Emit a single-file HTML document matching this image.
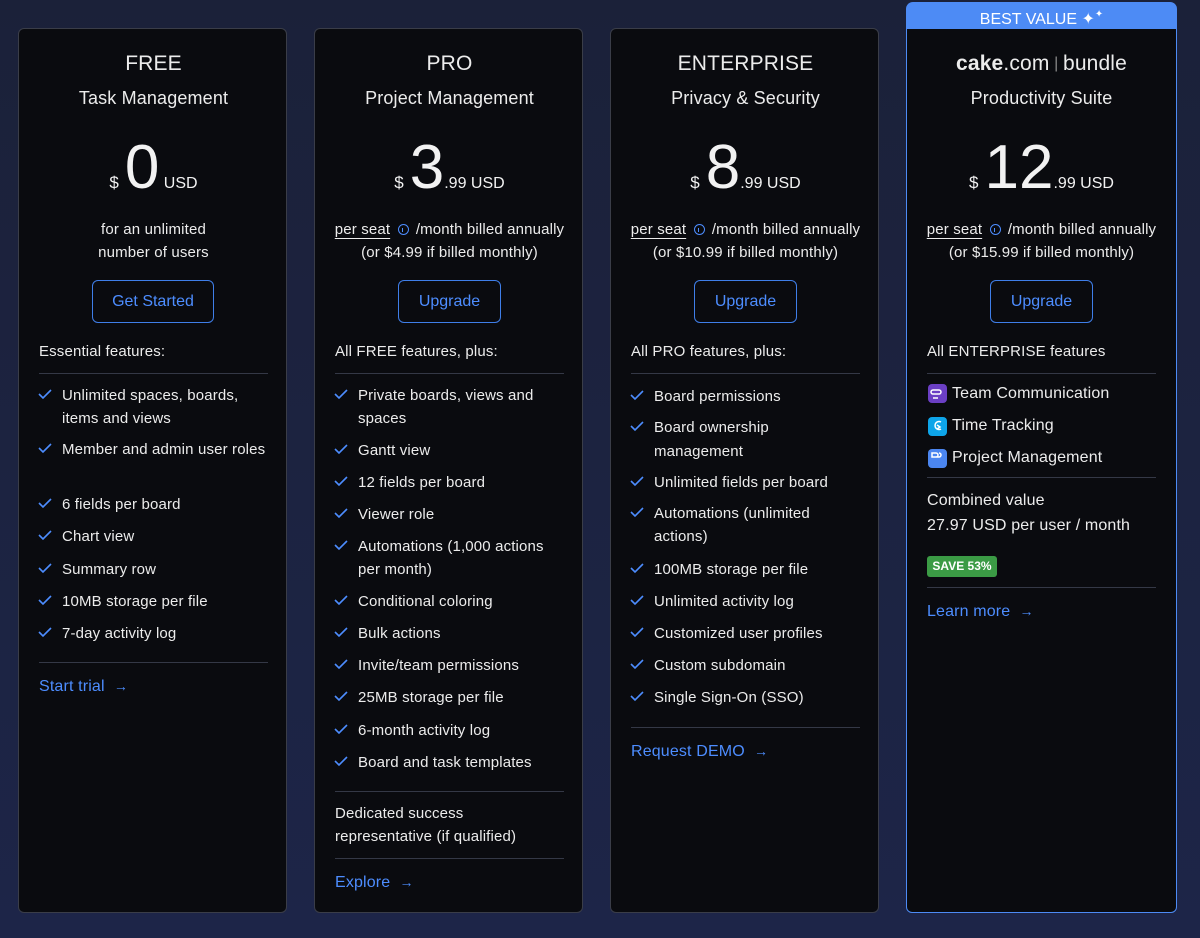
<!DOCTYPE html>
<html><head><meta charset="utf-8"><style>
*{margin:0;padding:0;box-sizing:border-box}
body{width:1200px;height:938px;overflow:hidden;background:linear-gradient(180deg,#1b2139 0%,#1d2548 100%);font-family:"Liberation Sans",sans-serif;color:#f2f2f2;position:relative}
.card{position:absolute;top:28px;height:885px;width:269px;background:#0a0b0f;border:1px solid #3a3d48;border-radius:6px}
.t{position:absolute;font-size:15px;line-height:24px;white-space:nowrap;color:#ececec;letter-spacing:0.15px}
.c{text-align:center;width:269px;left:0}
.h1{font-size:21px;top:23px!important}
.h2{font-size:18px;top:57px!important}
.hr{position:absolute;height:1px;background:#343846;width:229px;left:20px}
.btn{position:absolute;top:251px;height:43px;border:1px solid #3f7ee8;border-radius:6px;color:#4d8dff;font-size:16px;line-height:41px;text-align:center}
.price{position:absolute;left:0;width:269px;top:108px;display:flex;justify-content:center;align-items:baseline;height:80px}
.price .s{font-size:17px;margin-right:6px}
.price .b{font-size:62px;line-height:62px}
.price .u{font-size:16px}
.li{left:43px}
.link{color:#4d8dff;font-size:16px}
.ps{text-decoration:underline;text-underline-offset:4px}
.i{display:inline-block;width:11px;height:11px;border:1.3px solid #4d8dff;border-radius:50%;vertical-align:-1px;margin:0 3px;position:relative}
.i:after{content:"";position:absolute;left:3.5px;top:3px;width:1.3px;height:4px;background:#4d8dff}
.ar{font-weight:bold;font-size:14px}
</style></head><body>

<!-- FREE -->
<div class="card" style="left:18px">
<div class="t c h1">FREE</div>
<div class="t c h2">Task Management</div>
<div class="price"><span class="s">$</span><span class="b">0</span><span class="u">&nbsp;USD</span></div>
<div class="t c" style="top:189px">for an unlimited</div>
<div class="t c" style="top:212px">number of users</div>
<div class="btn" style="left:73px;width:122px">Get Started</div>
<div class="t" style="left:20px;top:311px">Essential features:</div>
<div class="hr" style="top:344px"></div>
<div class="t li" style="top:355px">Unlimited spaces, boards,</div>
<div class="t li" style="top:378px">items and views</div>
<div class="t li" style="top:409px">Member and admin user roles</div>
<div class="t li" style="top:464px">6 fields per board</div>
<div class="t li" style="top:496px">Chart view</div>
<div class="t li" style="top:529px">Summary row</div>
<div class="t li" style="top:561px">10MB storage per file</div>
<div class="t li" style="top:593px">7-day activity log</div>
<div class="hr" style="top:633px"></div>
<div class="t link" style="left:20px;top:645px">Start trial &nbsp;<span class="ar">→</span></div>
</div>

<!-- PRO -->
<div class="card" style="left:314px">
<div class="t c h1">PRO</div>
<div class="t c h2">Project Management</div>
<div class="price"><span class="s">$</span><span class="b">3</span><span class="u">.99 USD</span></div>
<div class="t c" style="top:189px"><span class="ps">per seat</span> <span class="i"></span> /month billed annually</div>
<div class="t c" style="top:212px">(or $4.99 if billed monthly)</div>
<div class="btn" style="left:83px;width:103px">Upgrade</div>
<div class="t" style="left:20px;top:311px">All FREE features, plus:</div>
<div class="hr" style="top:344px"></div>
<div class="t li" style="top:355px">Private boards, views and</div>
<div class="t li" style="top:378px">spaces</div>
<div class="t li" style="top:410px">Gantt view</div>
<div class="t li" style="top:442px">12 fields per board</div>
<div class="t li" style="top:474px">Viewer role</div>
<div class="t li" style="top:506px">Automations (1,000 actions</div>
<div class="t li" style="top:529px">per month)</div>
<div class="t li" style="top:561px">Conditional coloring</div>
<div class="t li" style="top:593px">Bulk actions</div>
<div class="t li" style="top:625px">Invite/team permissions</div>
<div class="t li" style="top:657px">25MB storage per file</div>
<div class="t li" style="top:690px">6-month activity log</div>
<div class="t li" style="top:722px">Board and task templates</div>
<div class="hr" style="top:762px"></div>
<div class="t" style="left:20px;top:773px">Dedicated success</div>
<div class="t" style="left:20px;top:796px">representative (if qualified)</div>
<div class="hr" style="top:829px"></div>
<div class="t link" style="left:20px;top:841px">Explore &nbsp;<span class="ar">→</span></div>
</div>

<!-- ENTERPRISE -->
<div class="card" style="left:610px">
<div class="t c h1">ENTERPRISE</div>
<div class="t c h2">Privacy &amp; Security</div>
<div class="price"><span class="s">$</span><span class="b">8</span><span class="u">.99 USD</span></div>
<div class="t c" style="top:189px"><span class="ps">per seat</span> <span class="i"></span> /month billed annually</div>
<div class="t c" style="top:212px">(or $10.99 if billed monthly)</div>
<div class="btn" style="left:83px;width:103px">Upgrade</div>
<div class="t" style="left:20px;top:311px">All PRO features, plus:</div>
<div class="hr" style="top:344px"></div>
<div class="t li" style="top:356px">Board permissions</div>
<div class="t li" style="top:387px">Board ownership</div>
<div class="t li" style="top:411px">management</div>
<div class="t li" style="top:442px">Unlimited fields per board</div>
<div class="t li" style="top:473px">Automations (unlimited</div>
<div class="t li" style="top:496px">actions)</div>
<div class="t li" style="top:529px">100MB storage per file</div>
<div class="t li" style="top:561px">Unlimited activity log</div>
<div class="t li" style="top:593px">Customized user profiles</div>
<div class="t li" style="top:625px">Custom subdomain</div>
<div class="t li" style="top:657px">Single Sign-On (SSO)</div>
<div class="hr" style="top:698px"></div>
<div class="t link" style="left:20px;top:710px">Request DEMO &nbsp;<span class="ar">→</span></div>
</div>

<!-- BUNDLE -->
<div style="position:absolute;left:906px;top:2px;width:271px;height:30px;background:#4d8bf5;border-radius:7px 7px 0 0;color:#fff;font-size:16px;line-height:26px;text-align:center">BEST VALUE <span style="font-size:16px">✦</span><span style="font-size:10px;vertical-align:7px">✦</span></div>
<div class="card" style="left:906px;width:271px;border-color:#4d8bf5;border-radius:0 0 6px 6px">
<div class="t c h1" style="width:269px"><b style="font-weight:bold">cake</b>.com<span style="color:#888;font-size:16px;vertical-align:2px"> | </span>bundle</div>
<div class="t c h2">Productivity Suite</div>
<div class="price"><span class="s">$</span><span class="b">12</span><span class="u">.99 USD</span></div>
<div class="t c" style="top:189px"><span class="ps">per seat</span> <span class="i"></span> /month billed annually</div>
<div class="t c" style="top:212px">(or $15.99 if billed monthly)</div>
<div class="btn" style="left:83px;width:103px">Upgrade</div>
<div class="t" style="left:20px;top:311px">All ENTERPRISE features</div>
<div class="hr" style="top:344px"></div>
<div style="position:absolute;left:21px;top:355px;width:19px;height:19px;border-radius:4px;background:#6b3fc4"></div>
<div style="position:absolute;left:21px;top:388px;width:19px;height:19px;border-radius:4px;background:#0ea5e9"></div>
<div style="position:absolute;left:21px;top:420px;width:19px;height:19px;border-radius:4px;background:#4b86f0"></div>
<div class="t" style="left:45px;top:353px;font-size:16px">Team Communication</div>
<div class="t" style="left:45px;top:385px;font-size:16px">Time Tracking</div>
<div class="t" style="left:45px;top:417px;font-size:16px">Project Management</div>
<div class="hr" style="top:448px"></div>
<div class="t" style="left:20px;top:460px;font-size:16px">Combined value</div>
<div class="t" style="left:20px;top:485px;font-size:16px">27.97 USD per user / month</div>
<div style="position:absolute;left:20px;top:527px;width:70px;height:21px;background:#3b9b45;border-radius:3px;color:#fff;font-size:12px;font-weight:bold;line-height:21px;text-align:center">SAVE 53%</div>
<div class="hr" style="top:558px"></div>
<div class="t link" style="left:20px;top:570px">Learn more &nbsp;<span class="ar">→</span></div>
</div>

<svg width="1200" height="938" style="position:absolute;left:0;top:0;pointer-events:none" fill="none" stroke="#4d8dff" stroke-width="1.6">
<path d="M39 394l4 4 8-8M39 448l4 4 8-8M39 503l4 4 8-8M39 535l4 4 8-8M39 568l4 4 8-8M39 600l4 4 8-8M39 632l4 4 8-8"/>
<path d="M335 394l4 4 8-8M335 449l4 4 8-8M335 481l4 4 8-8M335 513l4 4 8-8M335 545l4 4 8-8M335 600l4 4 8-8M335 632l4 4 8-8M335 664l4 4 8-8M335 696l4 4 8-8M335 729l4 4 8-8M335 761l4 4 8-8"/>
<path d="M631 395l4 4 8-8M631 426l4 4 8-8M631 481l4 4 8-8M631 512l4 4 8-8M631 568l4 4 8-8M631 600l4 4 8-8M631 632l4 4 8-8M631 664l4 4 8-8M631 696l4 4 8-8"/>
<g stroke="#fff" stroke-width="1.5">
<path d="M933 390h6a2 2 0 010 4h-6a2 2 0 010-4zM933 398h5"/>
<path d="M941 422a4 4 0 100 7M937 425l3 2-3 2"/>
<path d="M932 453h4a2 2 0 010 4h-4zM936 457h3a2 2 0 000-4"/>
</g>
</svg>
</body></html>
